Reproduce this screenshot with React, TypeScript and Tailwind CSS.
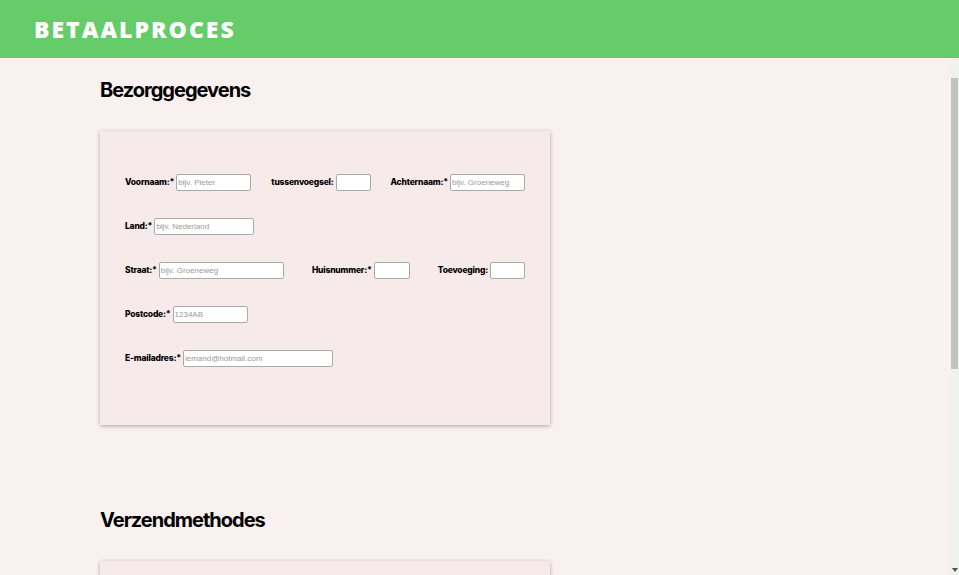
import type { ReactNode } from 'react';

const labelCls =
  "text-[8.5px] font-extrabold tracking-[-0.2px] text-black font-['Inter','Noto_Sans',sans-serif] whitespace-nowrap mr-[2px]";

function Field({ label, placeholder, width }: { label: string; placeholder?: string; width: string }) {
  return (
    <label className="flex items-center">
      <span className={labelCls}>{label}</span>
      <input
        type="text"
        placeholder={placeholder}
        className={`${width} h-[17px] bg-white border border-[#a9a9a9] rounded-[2px] px-[1px] text-[8px] font-['Liberation_Sans',Arial,sans-serif] placeholder:text-[#9a9a9a] outline-none`}
      />
    </label>
  );
}

function Row({ children, spread }: { children: ReactNode; spread?: boolean }) {
  return (
    <div className={`h-[44px] flex items-center ${spread ? 'justify-between' : ''}`}>{children}</div>
  );
}

function SectionTitle({ children }: { children: ReactNode }) {
  return (
    <h2 className="text-[20px] leading-[28px] font-bold text-black font-['Inter','Noto_Sans',sans-serif] tracking-[-1px]">
      {children}
    </h2>
  );
}

export default function App() {
  return (
    <div className="h-screen flex flex-col bg-[#f9f0f0]">
      {/* Header */}
      <header className="h-[58px] shrink-0 bg-[#66cc69] flex items-center px-[34px]">
        <h1 className="text-white text-[23px] font-extrabold tracking-[2px] font-['Open_Sans','Noto_Sans',sans-serif]">
          BETAALPROCES
        </h1>
      </header>

      <div className="flex-1 flex min-h-0">
        {/* Content */}
        <main className="flex-1 overflow-hidden">
          <div className="pl-[100px] pt-[18px] pb-[40px]">
            <SectionTitle>Bezorggegevens</SectionTitle>

            <section className="mt-[27px] w-[450px] bg-[#f7eaea] shadow-[0_1px_4px_rgba(0,0,0,0.3)] px-[25px] pt-[29px] pb-[45px]">
              <Row spread>
                <Field label="Voornaam:*" placeholder="bijv. Pieter" width="w-[75px]" />
                <Field label="tussenvoegsel:" width="w-[35px]" />
                <Field label="Achternaam:*" placeholder="bijv. Groeneweg" width="w-[75px]" />
              </Row>
              <Row>
                <Field label="Land:*" placeholder="bijv. Nederland" width="w-[100px]" />
              </Row>
              <Row spread>
                <Field label="Straat:*" placeholder="bijv. Groeneweg" width="w-[125px]" />
                <Field label="Huisnummer:*" width="w-[36px]" />
                <Field label="Toevoeging:" width="w-[35px]" />
              </Row>
              <Row>
                <Field label="Postcode:*" placeholder="1234AB" width="w-[75px]" />
              </Row>
              <Row>
                <Field label="E-mailadres:*" placeholder="iemand@hotmail.com" width="w-[150px]" />
              </Row>
            </section>

            <div className="mt-[81px]">
              <SectionTitle>Verzendmethodes</SectionTitle>
            </div>

            <section className="mt-[27px] w-[450px] h-[230px] bg-[#f7eaea] shadow-[0_1px_4px_rgba(0,0,0,0.3)]" />
          </div>
        </main>

        {/* Scrollbar */}
        <div className="w-[9px] shrink-0 bg-[#f1f1f1] flex flex-col items-center pt-[20px] pb-[3px]">
          <div className="w-[7px] h-[291px] bg-[#c1c1c1]" />
          <div className="flex-1" />
          <div className="w-0 h-0 border-l-[3px] border-r-[3px] border-t-[4px] border-l-transparent border-r-transparent border-t-[#505050]" />
        </div>
      </div>
    </div>
  );
}
